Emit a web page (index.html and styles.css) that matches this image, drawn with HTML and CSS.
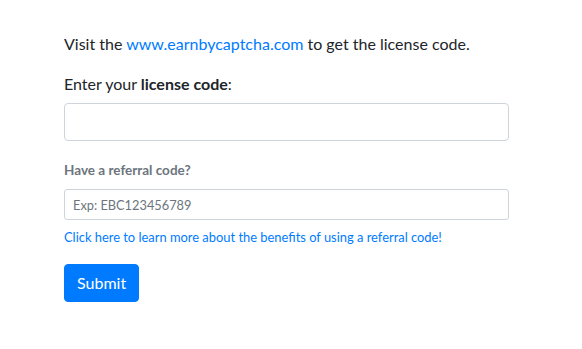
FILE: index.html
```html
<!DOCTYPE html>
<html lang="en">
<head>
<meta charset="utf-8">
<title>License</title>
<link rel="stylesheet" href="styles.css">
</head>
<body>
<main class="page">
  <form class="license-form">
    <p class="intro">Visit the <a href="#" class="link">www.earnbycaptcha.com</a> to get the license code.</p>
    <div class="group">
      <label class="label-main" for="lic">Enter your <strong>license code</strong>:</label>
      <input class="field" id="lic" type="text">
    </div>
    <div class="group">
      <label class="label-small" for="ref">Have a referral code?</label>
      <input class="field field-sm" id="ref" type="text" placeholder="Exp: EBC123456789">
      <a href="#" class="link help">Click here to learn more about the benefits of using a referral code!</a>
    </div>
    <button type="button" class="btn">Submit</button>
  </form>
</main>
</body>
</html>
```
FILE: styles.css
```css
* { box-sizing: border-box; }
html, body { margin: 0; padding: 0; background: #fff; }
body {
  font-family: "Segoe UI", Lato, "Liberation Sans", sans-serif;
  font-size: 16px;
  line-height: 1.5;
  color: #212529;
}
.page {
  padding: 32px 73px 0 64px;
}
.license-form {
  display: flex;
  flex-direction: column;
}
.intro { margin: 0 0 16px; }
.link { color: #007bff; text-decoration: none; }
.group { display: flex; flex-direction: column; margin-bottom: 16px; }
.label-main { margin-bottom: 7px; }
.label-main strong { font-weight: 700; }
.field {
  height: 38px;
  padding: 6px 12px;
  font-family: "Segoe UI", Lato, "Liberation Sans", sans-serif;
  font-size: 16px;
  line-height: 1.5;
  color: #495057;
  background: #fff;
  border: 1px solid #ced4da;
  border-radius: 4px;
  width: 100%;
}
.label-small {
  font-size: 13.5px;
  font-weight: 700;
  color: #6c757d;
  line-height: 21px;
  margin-top: 3px;
  margin-bottom: 8px;
}
.field.field-sm {
  height: 31px;
  padding: 4px 8px;
  font-size: 14px;
  line-height: 1.5;
  border-radius: 3px;
}
.field.field-sm::placeholder { color: #6c757d; opacity: 1; font-size: 12.8px; }
.help {
  font-size: 12.9px;
  line-height: 20px;
  margin-top: 7px;
}
.btn {
  align-self: flex-start;
  height: 38px;
  margin-top: 1px;
  padding: 6px 12px;
  font-family: inherit;
  font-size: 16px;
  line-height: 1.5;
  color: #fff;
  background: #007bff;
  border: 1px solid #007bff;
  border-radius: 4px;
}
```
